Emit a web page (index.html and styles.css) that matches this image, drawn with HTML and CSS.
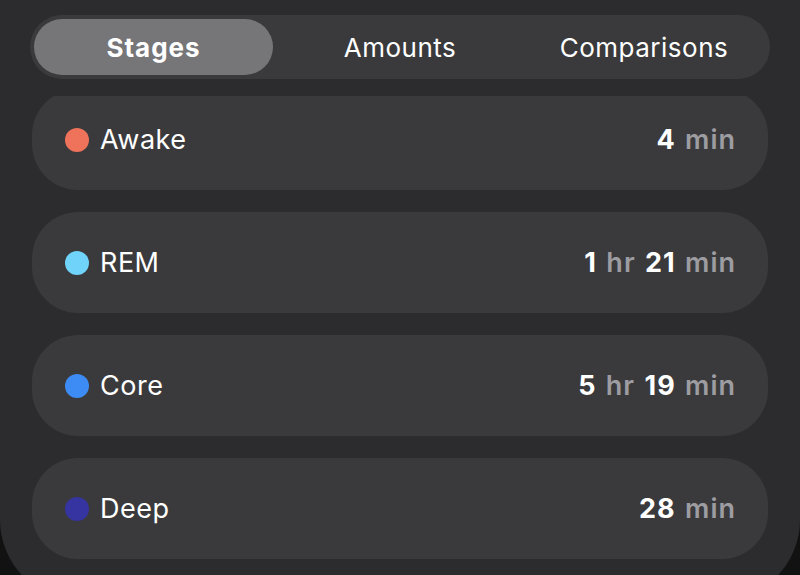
FILE: index.html
```html
<!DOCTYPE html>
<html>
<head>
<meta charset="utf-8">
<link rel="stylesheet" href="styles.css">
</head>
<body>
<div class="panel">
  <div class="segmented">
    <div class="seg seg-active">Stages</div>
    <div class="seg">Amounts</div>
    <div class="seg">Comparisons</div>
  </div>
  <div class="list">
    <div class="row row-first">
      <span class="dot dot-awake"></span>
      <span class="label">Awake</span>
      <span class="value"><b>4</b> <i>min</i></span>
    </div>
    <div class="row">
      <span class="dot dot-rem"></span>
      <span class="label">REM</span>
      <span class="value"><b>1</b> <i>hr</i> <b>21</b> <i>min</i></span>
    </div>
    <div class="row">
      <span class="dot dot-core"></span>
      <span class="label">Core</span>
      <span class="value"><b>5</b> <i>hr</i> <b>19</b> <i>min</i></span>
    </div>
    <div class="row">
      <span class="dot dot-deep"></span>
      <span class="label">Deep</span>
      <span class="value"><b>28</b> <i>min</i></span>
    </div>
  </div>
</div>
</body>
</html>
```
FILE: styles.css
```css
html, body {
  margin: 0;
  padding: 0;
  background: #121212;
  height: 575px;
  overflow: hidden;
}
body {
  font-family: Inter, "Liberation Sans", sans-serif;
  color: #ffffff;
}
.panel {
  width: 800px;
  height: 600px;
  background: #2c2c2e;
  border-radius: 0 0 80px 80px;
  padding-top: 15px;
  box-sizing: border-box;
}
.segmented {
  margin: 0 30px;
  height: 64px;
  background: #3a3a3c;
  border-radius: 32px;
  padding: 4px;
  box-sizing: border-box;
  display: grid;
  grid-template-columns: 1fr 1fr 1fr;
}
.seg {
  display: flex;
  align-items: center;
  justify-content: center;
  font-size: 26px;
  font-weight: 400;
  letter-spacing: 0.5px;
  border-radius: 28px;
  color: #ffffff;
}
.seg-active {
  background: #767679;
  font-weight: 700;
  letter-spacing: 1px;
  margin-right: 5px;
}
.list {
  margin: 17px 32px 0;
  height: 480px;
  overflow: hidden;
  display: flex;
  flex-direction: column;
  gap: 22px;
}
.row {
  flex: none;
  height: 101px;
  background: #3a3a3c;
  border-radius: 46px;
  display: flex;
  align-items: center;
  padding: 0 32px 0 33px;
  box-sizing: border-box;
}
.row-first {
  margin-top: -7px;
}
.dot {
  width: 24px;
  height: 24px;
  border-radius: 50%;
  margin-right: 11px;
}
.dot-awake { background: #ef725a; }
.dot-rem { background: #6fd3fa; }
.dot-core { background: #3d8cf6; }
.dot-deep { background: #3634a0; }
.label {
  font-size: 27px;
  letter-spacing: 0.5px;
  flex: 1;
}
.value {
  font-size: 27px;
  font-weight: 700;
  letter-spacing: 1px;
  word-spacing: 2px;
}
.value b {
  font-weight: 700;
  color: #ffffff;
}
.value i {
  font-style: normal;
  font-weight: 600;
  color: #9c9ca1;
}
```
